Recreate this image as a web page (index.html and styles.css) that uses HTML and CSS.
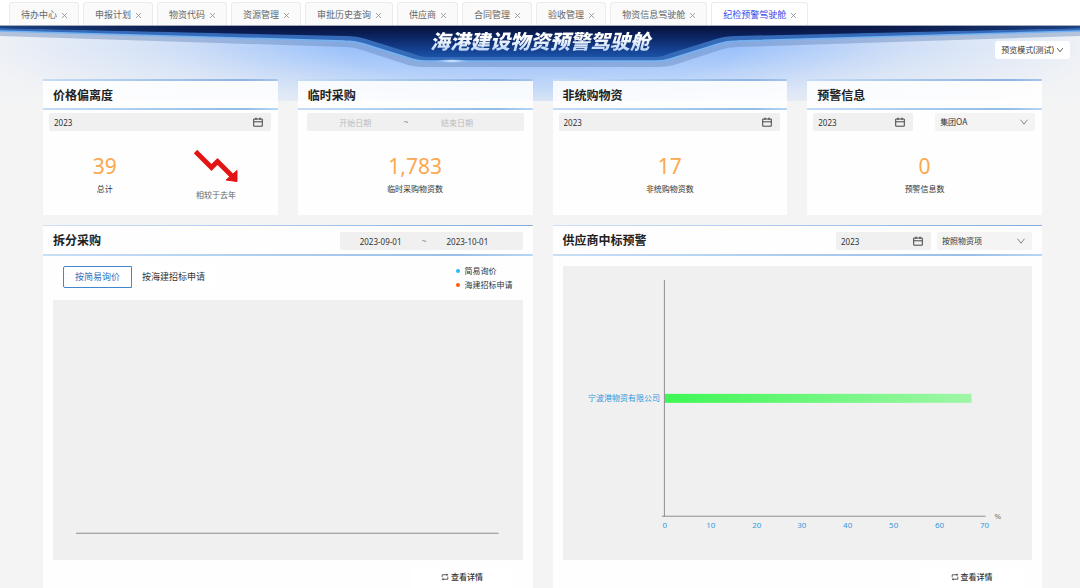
FILE: index.html
```html
<!DOCTYPE html>
<html lang="zh-CN">
<head>
<meta charset="utf-8">
<title>海港建设物资预警驾驶舱</title>
<link rel="stylesheet" href="styles.css">
</head>
<body>
<svg class="sprite" aria-hidden="true">
  <symbol id="i-close" viewBox="0 0 8 8"><path d="M1.2 1.2l5.6 5.6M6.8 1.2L1.2 6.8"/></symbol>
  <symbol id="i-down" viewBox="0 0 10 10"><path d="M1.5 2.7L5 7.2l3.500-4.500"/></symbol>
  <symbol id="i-cal" viewBox="0 0 10 10"><path d="M.7 2h8.600v7.200H.7zM.7 4.800h8.600M3 .6v2.400M7 .6v2.400"/></symbol>
  <symbol id="i-loop" viewBox="0 0 10 10"><path d="M1.500 4V2.200h6.200M8.500 6v1.800H2.300M1.500 5.500V4M8.500 4.500V6"/><path d="M7 .6l2 1.600-2 1.600zM3 6.200l-2 1.600 2 1.600z" class="solid"/></symbol>
</svg>

<nav class="tabs">
  <a class="tab" href="#">待办中心<svg class="icon close"><use href="#i-close"/></svg></a>
  <a class="tab" href="#">申报计划<svg class="icon close"><use href="#i-close"/></svg></a>
  <a class="tab" href="#">物资代码<svg class="icon close"><use href="#i-close"/></svg></a>
  <a class="tab" href="#">资源管理<svg class="icon close"><use href="#i-close"/></svg></a>
  <a class="tab" href="#">审批历史查询<svg class="icon close"><use href="#i-close"/></svg></a>
  <a class="tab" href="#">供应商<svg class="icon close"><use href="#i-close"/></svg></a>
  <a class="tab" href="#">合同管理<svg class="icon close"><use href="#i-close"/></svg></a>
  <a class="tab" href="#">验收管理<svg class="icon close"><use href="#i-close"/></svg></a>
  <a class="tab" href="#">物资信息驾驶舱<svg class="icon close"><use href="#i-close"/></svg></a>
  <a class="tab active" href="#" aria-current="page">纪检预警驾驶舱<svg class="icon close"><use href="#i-close"/></svg></a>
</nav>

<header class="hero">
  <svg class="hero-art" viewBox="0 0 1080 75" preserveAspectRatio="none" aria-hidden="true">
    <defs>
      <linearGradient id="g-deep" x1="0" y1="0" x2="0" y2="1">
        <stop offset="0" stop-color="#07103a"/><stop offset=".45" stop-color="#0d2b6e"/><stop offset="1" stop-color="#1a52a8"/>
      </linearGradient>
      <linearGradient id="g-side" x1="0" y1="0" x2="1" y2="0">
        <stop offset="0" stop-color="#1c4384"/><stop offset=".32" stop-color="#07103a" stop-opacity="0"/>
        <stop offset=".68" stop-color="#07103a" stop-opacity="0"/><stop offset="1" stop-color="#1c4384"/>
      </linearGradient>
      <radialGradient id="g-spark"><stop offset="0" stop-color="#fff"/><stop offset="1" stop-color="#8cc4ff" stop-opacity="0"/></radialGradient>
    </defs>
    <path class="hero-shade" d="M0 0V10L345 21Q354 21 362 24L408 39Q415 41 424 41H658Q667 41 674 39L720 24Q728 21 737 21L1080 10V0Z"/>
    <path class="hero-band" d="M0 0V5L345 15Q355 15 364 18L412 33Q418 35 426 35H656Q664 35 670 33L718 18Q727 15 737 15L1080 5V0Z"/>
    <path fill="url(#g-deep)" d="M0 0V2L345 10Q357 10 366 13L414 28Q420 31 428 31H654Q662 31 668 28L716 13Q725 10 737 10L1080 2V0Z"/>
    <path fill="url(#g-side)" d="M0 0V2L345 10H737L1080 2V0Z"/>
    <path class="hero-line" d="M0 5L345 15Q355 15 364 18L412 33Q418 35 426 35H656Q664 35 670 33L718 18Q727 15 737 15L1080 5"/>
    <ellipse cx="452" cy="35" rx="18" ry="2" fill="url(#g-spark)"/>
  </svg>
  <h1 class="hero-title">海港建设物资预警驾驶舱</h1>
  <button class="mode" type="button">预览模式(测试)<svg class="icon small"><use href="#i-down"/></svg></button>
</header>

<main class="board">
  <section class="card">
    <header class="card-head"><h2>价格偏离度</h2></header>
    <div class="filters">
      <label class="field"><input type="text" value="2023" aria-label="年份"><svg class="icon"><use href="#i-cal"/></svg></label>
    </div>
    <div class="stats">
      <div class="stat"><strong>39</strong><span>总计</span></div>
      <div class="stat trend">
        <svg class="arrow" viewBox="0 0 44 32" aria-hidden="true"><path d="M1.500 1.500L17.500 17.500l6-6L38 26" fill="none" stroke="#e31414" stroke-width="4.800"/><path d="M43 20.500V31.500L32 30z" fill="#e31414" stroke="#e31414"/></svg>
        <span>相较于去年</span>
      </div>
    </div>
  </section>

  <section class="card">
    <header class="card-head"><h2>临时采购</h2></header>
    <div class="filters wide">
      <div class="field range"><input type="text" placeholder="开始日期" aria-label="开始日期"><span>~</span><input type="text" placeholder="结束日期" aria-label="结束日期"><i class="range-end"></i></div>
    </div>
    <div class="stats"><div class="stat"><strong>1,783</strong><span>临时采购物资数</span></div></div>
  </section>

  <section class="card">
    <header class="card-head"><h2>非统购物资</h2></header>
    <div class="filters">
      <label class="field"><input type="text" value="2023" aria-label="年份"><svg class="icon"><use href="#i-cal"/></svg></label>
    </div>
    <div class="stats"><div class="stat"><strong>17</strong><span>非统购物资数</span></div></div>
  </section>

  <section class="card">
    <header class="card-head"><h2>预警信息</h2></header>
    <div class="filters split">
      <label class="field"><input type="text" value="2023" aria-label="年份"><svg class="icon"><use href="#i-cal"/></svg></label>
      <label class="field pick"><select aria-label="来源"><option>集团OA</option></select><svg class="icon chevron"><use href="#i-down"/></svg></label>
    </div>
    <div class="stats"><div class="stat"><strong>0</strong><span>预警信息数</span></div></div>
  </section>

  <section class="card large">
    <header class="card-head">
      <h2>拆分采购</h2>
      <div class="field range dates"><input type="text" value="2023-09-01" aria-label="开始日期"><span>~</span><input type="text" value="2023-10-01" aria-label="结束日期"><i class="range-end"></i></div>
    </header>
    <div class="toolbar">
      <div class="switch">
        <button class="switch-item on" type="button">按简易询价</button><button class="switch-item" type="button">按海建招标申请</button>
      </div>
      <ul class="legend"><li class="blue">简易询价</li><li class="orange">海建招标申请</li></ul>
    </div>
    <div class="panel">
      <svg class="chart" viewBox="0 0 470 260" role="img" aria-label="拆分采购"><path class="axis" d="M23 233.500H446"/></svg>
    </div>
    <button class="detail" type="button"><svg class="icon small"><use href="#i-loop"/></svg>查看详情</button>
  </section>

  <section class="card large">
    <header class="card-head">
      <h2>供应商中标预警</h2>
      <div class="head-tools">
        <label class="field"><input type="text" value="2023" aria-label="年份"><svg class="icon"><use href="#i-cal"/></svg></label>
        <label class="field pick"><select aria-label="统计方式"><option>按照物资项</option></select><svg class="icon chevron"><use href="#i-down"/></svg></label>
      </div>
    </header>
    <div class="panel top-gap">
      <svg class="chart" viewBox="0 0 470 294" role="img" aria-label="供应商中标预警">
        <defs><linearGradient id="g-bar"><stop offset="0" stop-color="#3df754"/><stop offset="1" stop-color="#a0f6a8"/></linearGradient></defs>
        <rect x="102" y="128" width="307" height="9" fill="url(#g-bar)"/>
        <path class="axis" d="M101.500 14V251M99 250.500H423"/>
        <g class="tick">
          <text x="97" y="135" class="end">宁波港物资有限公司</text>
          <text x="102" y="262">0</text><text x="148" y="262">10</text><text x="194" y="262">20</text><text x="239" y="262">30</text>
          <text x="285" y="262">40</text><text x="331" y="262">50</text><text x="377" y="262">60</text><text x="422" y="262">70</text>
        </g>
        <text class="unit" x="432" y="253">%</text>
      </svg>
    </div>
    <button class="detail" type="button"><svg class="icon small"><use href="#i-loop"/></svg>查看详情</button>
  </section>
</main>
</body>
</html>
```
FILE: styles.css
```css
* { box-sizing: border-box; }

body {
  margin: 0;
  min-height: 100vh;
  display: flex;
  flex-direction: column;
  background: #f4f4f4;
  color: #333;
  font: 8px/12px "Noto Sans", "Noto Sans CJK SC", sans-serif;
}

h1, h2, ul { margin: 0; padding: 0; }
button, input, select { font: inherit; color: inherit; border: 0; padding: 0; background: none; }
button { cursor: pointer; }

.sprite { display: none; }
.icon { width: 10px; height: 10px; flex: none; fill: none; stroke: currentColor; stroke-width: 0.9; }
.icon.small { width: 8px; height: 8px; stroke-width: 1; }
.icon.close { width: 7px; height: 7px; stroke: #888; }
.solid { fill: currentColor; stroke: none; }

/* Page tabs */
.tabs {
  display: flex;
  gap: 4px;
  height: 26px;
  padding: 2px 9px 0;
  background: #fff;
  border-bottom: 1px solid #a4acbc;
}
.tab {
  display: flex;
  align-items: center;
  gap: 4px;
  padding: 2px 10px 0 11px;
  border: 1px solid #ececec;
  border-bottom: 0;
  border-radius: 3px 3px 0 0;
  background: #fafafa;
  color: #666;
  font-size: 9px;
  text-decoration: none;
  white-space: nowrap;
}
.tab.active { background: #fff; color: #3a48ee; }

/* Banner */
.hero {
  position: relative;
  z-index: 0;
  display: grid;
  grid-template-columns: 1fr auto 1fr;
  height: 53px;
  padding-right: 10px;
}
.hero::before {
  content: "";
  position: absolute;
  z-index: -2;
  inset: 0 0 auto;
  height: 75px;
  background:
    linear-gradient(transparent 30%, rgba(244, 244, 244, .6)),
    radial-gradient(ellipse 52% 120px at 50% 20px, #8fbafa 0, #9cc2fb 35%, #d0dff7 65%, #f1f3f6 100%);
}
.hero-art { position: absolute; z-index: -1; inset: 0 0 auto; width: 100%; height: 75px; }
.hero-shade { fill: #5f7fb5; opacity: .4; }
.hero-band { fill: #356bb9; }
.hero-line { fill: none; stroke: #74b3f4; stroke-width: 1.5; }
.hero-title {
  grid-column: 2;
  align-self: start;
  padding: 3px 4px 0 14px;
  font-size: 20px;
  line-height: 26px;
  font-weight: 900;
  font-style: italic;
  background: linear-gradient(#fff 40%, #b4d0f8 90%);
  background-clip: text;
  -webkit-background-clip: text;
  color: transparent;
}
.mode {
  grid-column: 3;
  justify-self: end;
  align-self: start;
  display: flex;
  align-items: center;
  gap: 2px;
  height: 18px;
  margin-top: 15px;
  padding: 0 6px;
  border-radius: 3px;
  background: #fff;
}

/* Card grid */
.board {
  position: relative;
  z-index: 1;
  flex: 1;
  display: grid;
  grid-template-columns: repeat(4, 1fr);
  grid-template-rows: auto 1fr;
  gap: 10px 20px;
  padding: 0 38px 0 43px;
}
.card { display: flex; flex-direction: column; min-width: 0; background: rgba(255, 255, 255, .85); }
.card.large { grid-column: span 2; }
.card-head {
  display: flex;
  align-items: center;
  justify-content: space-between;
  height: 31px;
  padding: 2px 10px 0;
  background:
    linear-gradient(90deg, #c5dcf4, #8cb3e4 85%, #a4c6ec) top / 100% 2px no-repeat,
    linear-gradient(90deg, #c4ddf5, #8fbce8 85%, #b8d6f3) bottom / 100% 2px no-repeat;
}
.large .card-head {
  padding-top: 1px;
  background:
    linear-gradient(90deg, #cfe1f5, #80aade) top / 100% 1px no-repeat,
    linear-gradient(90deg, #c8dff5, #9abfe8 85%, #b8d6f3) bottom / 100% 2px no-repeat;
}
.card-head h2 { color: #222; font-size: 12px; line-height: 18px; font-weight: 700; }
.head-tools { display: grid; grid-template-columns: 95px 95px; gap: 6px; }

/* Form fields */
.filters { padding: 3px 7px 0 6px; }
.filters.wide { padding-inline: 9px; }
.filters.split { display: grid; grid-template-columns: 1fr 1fr; gap: 22px; }
.field {
  display: flex;
  align-items: center;
  height: 18px;
  padding: 0 8px 0 5px;
  border-radius: 2px;
  background: #f0f0f0;
}
.field input, .field select { flex: 1; width: 0; min-width: 0; height: 18px; appearance: none; outline: 0; }
.field.pick { padding-right: 6px; background: #f4f4f4; }
.chevron { color: #777; }
.range { padding: 0; }
.range input { text-align: center; }
.range span { color: #888; }
.range input::placeholder { color: #bbb; opacity: 1; }
.range-end { width: 18px; }
.range.dates { width: 183px; }
.dates .range-end { width: 14px; }

/* Key figures */
.stats { display: grid; grid-auto-flow: column; grid-auto-columns: 1fr; height: 84px; padding: 0 6px; }
.stat { display: flex; flex-direction: column; align-items: center; padding-top: 20px; }
.stat strong { color: #fba850; font-size: 21px; line-height: 30px; font-weight: 400; }
.stat span { margin-top: 2px; }
.trend { gap: 7px; color: #666; padding-top: 19px; }
.stat.trend span { margin: 0; }
.arrow { width: 44px; height: 32px; }

/* Lower cards */
.toolbar { display: flex; justify-content: space-between; height: 44px; padding: 10px 20px 0; }
.switch { display: flex; align-items: start; }
.switch-item { height: 22px; padding: 0 10px; background: #fff; font-size: 9px; border-radius: 0 2px 2px 0; }
.switch-item.on { padding: 0 11px; border: 1px solid #4286cc; border-radius: 2px 0 0 2px; color: #2c6fc0; }
.legend { list-style: none; margin-top: -2px; line-height: 14px; }
.legend li { display: flex; align-items: center; gap: 5px; }
.legend li::before { content: ""; width: 4px; height: 4px; border-radius: 50%; background: #2db7f5; }
.legend .orange::before { background: #ff5a0a; }
.panel { margin: 0 10px; background: #f0f0f0; }
.panel.top-gap { margin-top: 10px; }
.chart { display: block; width: 100%; height: auto; }
.axis { fill: none; stroke: #8c8c94; stroke-width: 1; }
.tick { fill: #3398db; text-anchor: middle; }
.tick .end { text-anchor: end; }
.unit { fill: #777; }
.detail {
  display: flex;
  align-items: center;
  justify-content: center;
  gap: 2px;
  align-self: flex-end;
  width: 101px;
  height: 23px;
  margin: 6px 20px 0;
  border-radius: 2px;
  background: #fff;
  font-weight: 500;
}
```
